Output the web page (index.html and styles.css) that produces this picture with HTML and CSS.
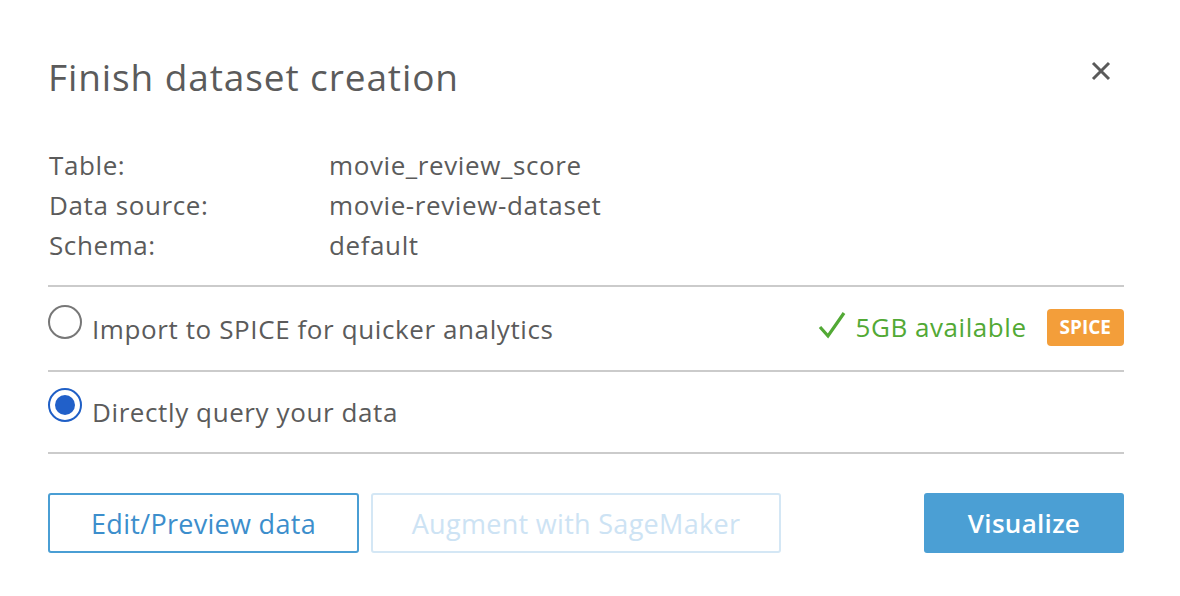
FILE: index.html
```html
<!DOCTYPE html>
<html lang="en">
<head>
<meta charset="utf-8">
<title>Finish dataset creation</title>
<link rel="stylesheet" href="styles.css">
</head>
<body>
<div class="dialog">
  <div class="header">
    <h1 class="title">Finish dataset creation</h1>
    <button class="close" aria-label="Close">
      <svg width="20" height="20" viewBox="0 0 20 20"><path d="M2 2 L18 18 M18 2 L2 18" stroke="#5a5a5a" stroke-width="3" fill="none"/></svg>
    </button>
  </div>
  <div class="info">
    <div class="label">Table:</div><div class="value">movie_review_score</div>
    <div class="label">Data source:</div><div class="value">movie-review-dataset</div>
    <div class="label">Schema:</div><div class="value">default</div>
  </div>
  <div class="option">
    <span class="radio"></span>
    <span class="opt-text">Import to SPICE for quicker analytics</span>
    <span class="avail">
      <svg width="28" height="28" viewBox="0 0 28 28"><path d="M2 16 L10 25 L26 2" stroke="#52a935" stroke-width="3.2" fill="none"/></svg>
      5GB available
    </span>
    <span class="badge">SPICE</span>
  </div>
  <div class="option option-last">
    <span class="radio checked"></span>
    <span class="opt-text">Directly query your data</span>
  </div>
  <div class="footer">
    <button class="btn btn-outline">Edit/Preview data</button>
    <button class="btn btn-disabled">Augment with SageMaker</button>
    <span class="spacer"></span>
    <button class="btn btn-primary">Visualize</button>
  </div>
</div>
</body>
</html>
```
FILE: styles.css
```css
html, body { margin: 0; padding: 0; background: #fff; }
body { font-family: "Open Sans", "Noto Sans", Arial, sans-serif; color: #5b5b5b; }
.dialog { width: 1076px; padding: 0 56px 0 48px; }
.header { display: flex; justify-content: space-between; align-items: flex-start; padding-top: 53px; height: 92px; box-sizing: border-box; }
.title { margin: 0; font-size: 37px; font-weight: 400; line-height: 48px; color: #5b5b5b; letter-spacing: 0.9px; }
.close { border: 0; background: none; padding: 0; margin: 7px 12px 0 0; width: 22px; height: 22px; display: flex; align-items: center; justify-content: center; }
.info { display: grid; grid-template-columns: 280px 1fr; grid-auto-rows: 40px; align-items: center; margin-top: 53px; font-size: 26px; letter-spacing: 0.6px; padding-bottom: 20px; border-bottom: 2px solid #cbcbcb; }
.label, .value { line-height: 40px; padding-left: 1px; }
.option { display: flex; align-items: center; height: 83px; border-bottom: 2px solid #cbcbcb; }
.option-last { height: 80px; }
.radio { width: 30px; height: 30px; border: 2px solid #777; border-radius: 50%; display: flex; align-items: center; justify-content: center; margin: -14px 10px 0 0; flex: none; }
.radio.checked { border-color: #1f5fc6; }
.radio.checked::after { content: ""; width: 20px; height: 20px; border-radius: 50%; background: #2160c9; }
.opt-text { font-size: 26px; letter-spacing: 0.6px; flex: 1; }
.avail { display: flex; align-items: center; gap: 10px; color: #52a935; font-size: 26px; letter-spacing: 0.55px; margin-right: 20px; margin-top: -4px; }
.avail svg { margin-top: -4px; margin-left: -3px; }
.badge { background: #f39e3a; color: #fff; font-weight: 700; font-size: 19px; border-radius: 4px; padding: 0 13px; height: 37px; line-height: 37px; margin-top: -2px; }
.footer { display: flex; align-items: center; padding-top: 39px; gap: 12px; }
.spacer { flex: 1; }
.btn { font-family: inherit; font-size: 27px; letter-spacing: 0.3px; height: 60px; border-radius: 3px; padding: 0; background: #fff; }
.btn-outline { width: 311px; border: 2px solid #4a9ed4; color: #3c8ecc; }
.btn-disabled { width: 410px; border: 2px solid #d4e7f5; color: #cde3f4; }
.btn-primary { width: 200px; border: 0; background: #4b9fd4; color: #fff; font-weight: 600; font-size: 26px; }
```
